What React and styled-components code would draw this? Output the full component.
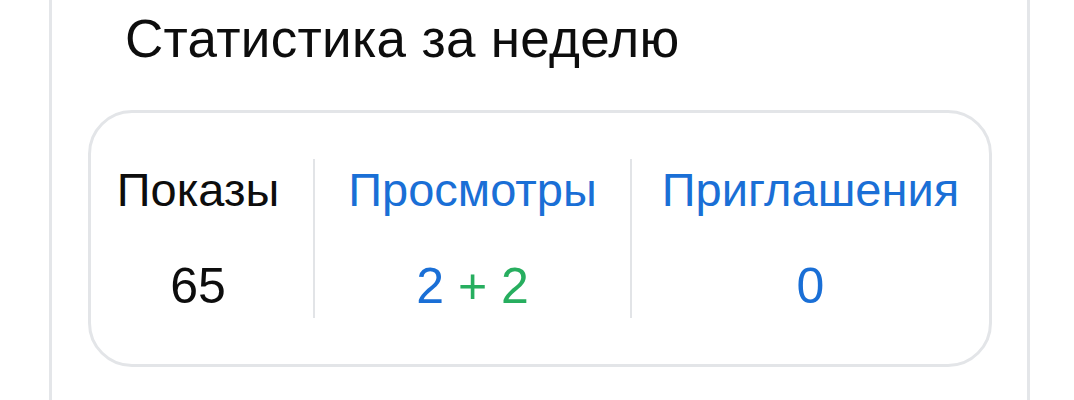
import React from "react";
import styled, { createGlobalStyle } from "styled-components";

const GlobalStyle = createGlobalStyle`
  html, body {
    margin: 0;
    padding: 0;
    background: #ffffff;
  }
  body {
    font-family: "Liberation Sans", Arial, "Noto Sans", sans-serif;
    color: #111111;
    -webkit-font-smoothing: antialiased;
  }
`;

const Page = styled.div`
  width: 1074px;
  height: 400px;
  overflow: hidden;
  background: #ffffff;
`;

const Panel = styled.section`
  box-sizing: border-box;
  margin-left: 49px;
  width: 981px;
  min-height: 400px;
  border-left: 3px solid #e4e6e9;
  border-right: 3px solid #e4e6e9;
  padding: 10px 35px 0 36px;
`;

const Title = styled.h2`
  margin: 0 0 0 37px;
  font-size: 53px;
  font-weight: 400;
  line-height: 58px;
  letter-spacing: 0.3px;
  color: #0d0d0d;
`;

const StatsCard = styled.div`
  box-sizing: border-box;
  margin-top: 42px;
  height: 257px;
  border: 3px solid #e3e5e8;
  border-radius: 44px;
  padding: 46px 0;
  display: flex;
  align-items: stretch;
`;

/* each column keeps its own width; the text is centred in it */
const Stat = styled.div`
  box-sizing: border-box;
  flex: ${(p) => (p.$width ? `0 0 ${p.$width}px` : "1 1 auto")};
  display: flex;
  flex-direction: column;
  align-items: center;
  justify-content: space-between;
  padding: 5px ${(p) => p.$endPad || 0}px 4px 0;
  & + & {
    border-left: 2px solid #e2e4e7;
  }
`;

const Label = styled.div`
  font-size: 47px;
  line-height: 52px;
  white-space: nowrap;
  color: ${(p) => (p.$accent ? "#1a6fd6" : "#0d0d0d")};
`;

const Value = styled.div`
  font-size: 50px;
  line-height: 56px;
  white-space: nowrap;
  color: ${(p) => (p.$accent ? "#1a6fd6" : "#0d0d0d")};
`;

const Extra = styled.span`
  color: #27ae5f;
`;

export default function App() {
  return (
    <Page>
      <GlobalStyle />
      <Panel>
        <Title>Статистика за неделю</Title>
        <StatsCard>
          <Stat $width={222} $endPad={8}>
            <Label>Показы</Label>
            <Value>65</Value>
          </Stat>
          <Stat $width={317}>
            <Label $accent>Просмотры</Label>
            <Value $accent>
              2 <Extra>+ 2</Extra>
            </Value>
          </Stat>
          <Stat>
            <Label $accent>Приглашения</Label>
            <Value $accent>0</Value>
          </Stat>
        </StatsCard>
      </Panel>
    </Page>
  );
}
